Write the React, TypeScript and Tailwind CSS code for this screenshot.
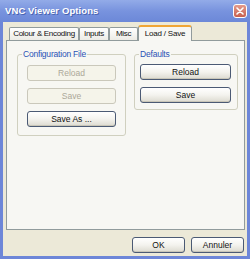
import React from 'react';

const font = { fontFamily: '"Liberation Sans", Arial, sans-serif' };

function XpButton({ label, disabled, className = '' }: { label: string; disabled?: boolean; className?: string }) {
  return (
    <button
      type="button"
      disabled={disabled}
      className={
        'h-[16px] rounded-[3px] border text-[8.5px] leading-none whitespace-nowrap flex items-center justify-center ' +
        (disabled
          ? 'border-[#cac8bb] bg-[#f5f4ea] text-[#aca899] '
          : 'border-[#4b5a74] bg-gradient-to-b from-[#ffffff] via-[#f4f3ee] to-[#dcdad0] text-[#111111] shadow-[inset_0_-1px_0_#c9c6b8] ') +
        className
      }
    >
      {label}
    </button>
  );
}

function Tab({ label, width, active }: { label: string; width: string; active?: boolean }) {
  if (active) {
    return (
      <div
        className={`${width} h-[16px] -mb-px z-10 relative rounded-t-[3px] border border-b-0 border-[#919b9c] border-t-[2px] border-t-[#f0a636] bg-[#f7f7f3] flex items-center justify-center whitespace-nowrap text-[8px] tracking-[-0.2px] text-[#111]`}
      >
        {label}
      </div>
    );
  }
  return (
    <div
      className={`${width} h-[13px] rounded-t-[2px] border border-b-0 border-[#919b9c] bg-gradient-to-b from-[#ffffff] to-[#ecebe5] flex items-center justify-center whitespace-nowrap text-[8px] tracking-[-0.3px] text-[#111]`}
    >
      {label}
    </div>
  );
}

export default function App() {
  return (
    <div style={font} className="w-[250px] h-[259px] bg-[#6d86d8] flex flex-col select-none">
      {/* title bar */}
      <div className="h-[22px] shrink-0 flex items-center justify-between pl-[5px] pr-[3px] bg-gradient-to-b from-[#93abe8] via-[#7893de] to-[#6c88d8]">
        <span className="text-white font-bold text-[9.5px] tracking-[0.1px] [text-shadow:1px_1px_0_#4a63b0]">
          VNC Viewer Options
        </span>
        <div className="w-[14px] h-[14px] rounded-[3px] border border-white bg-gradient-to-b from-[#e39a8c] to-[#c8604e] flex items-center justify-center">
          <svg width="8" height="8" viewBox="0 0 8 8">
            <path d="M1 1 L7 7 M7 1 L1 7" stroke="#ffffff" strokeWidth="1.6" strokeLinecap="round" />
          </svg>
        </div>
      </div>

      {/* client */}
      <div className="flex-1 mx-[3px] mb-[3px] bg-[#ece9d8] flex flex-col pt-[3px] pl-[3px] pr-[2px]">
        <div className="h-[15px] flex items-end pl-[3px]">
          <Tab label="Colour & Encoding" width="w-[70px]" />
          <Tab label="Inputs" width="w-[30px]" />
          <Tab label="Misc" width="w-[29px]" />
          <Tab label="Load / Save" width="w-[54px]" active />
        </div>

        <div className="h-[190px] border border-[#919b9c] bg-[#f7f7f3] flex gap-[8px] pt-[7px] pl-[10px]">
          <fieldset className="w-[108px] h-[88px] rounded-[3px] border border-[#d0d0bf] px-[9px] pb-[7px] flex flex-col gap-[7px]">
            <legend className="-ml-[5px] px-[1px] text-[8.5px] leading-[12px] tracking-[-0.2px] text-[#2a52b5]">Configuration File</legend>
            <XpButton label="Reload" disabled className="w-[89px] mt-[5px]" />
            <XpButton label="Save" disabled className="w-[89px]" />
            <XpButton label="Save As ..." className="w-[89px]" />
          </fieldset>

          <fieldset className="w-[104px] h-[62px] rounded-[3px] border border-[#d0d0bf] px-[5px] flex flex-col gap-[7px]">
            <legend className="-ml-[1px] px-[1px] text-[8.5px] leading-[12px] tracking-[-0.2px] text-[#2a52b5]">Defaults</legend>
            <XpButton label="Reload" className="w-[91px] mt-[4px]" />
            <XpButton label="Save" className="w-[91px]" />
          </fieldset>
        </div>

        <div className="mt-[7px] flex justify-end gap-[6px] pr-[1px]">
          <XpButton label="OK" className="w-[53px]" />
          <XpButton label="Annuler" className="w-[53px]" />
        </div>
      </div>
    </div>
  );
}
